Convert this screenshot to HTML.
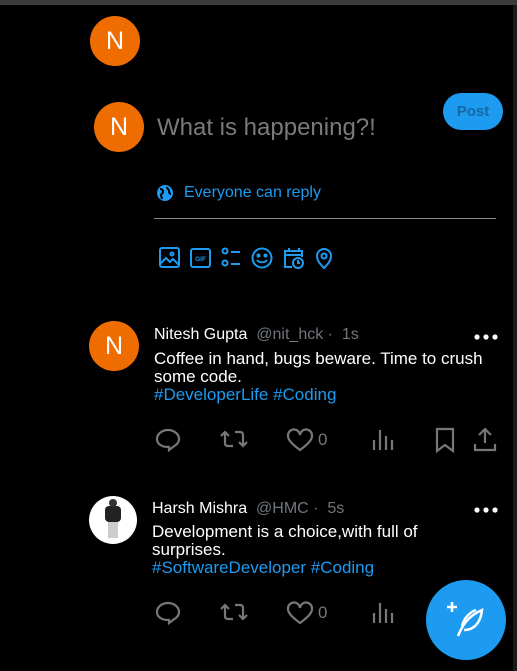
<!DOCTYPE html>
<html><head><style>
body{margin:0;width:517px;height:671px;background:#000;overflow:hidden;position:relative;font-family:"Liberation Sans",sans-serif;}
.a{position:absolute}
.av{position:absolute;border-radius:50%;background:#ef6c00;color:#fff;text-align:center;font-size:25px}
.t{position:absolute;white-space:nowrap}
.g{color:#71767b}
.b{color:#1d9bf0}
svg{position:absolute}
</style></head><body>
<div class="a" style="left:0;top:0;width:517px;height:5px;background:#3c3c3c"></div>
<div class="a" style="left:513px;top:5px;width:4px;height:666px;background:#1a1a1a"></div>
<div class="av" style="left:90px;top:16px;width:50px;height:50px;line-height:50px">N</div>
<div class="av" style="left:94px;top:102px;width:50px;height:50px;line-height:50px">N</div>
<div class="t" style="left:157px;top:114px;font-size:24px;color:#7a7a7a">What is happening?!</div>
<div class="a" style="left:443px;top:93px;width:60px;height:37px;border-radius:19px;background:#1d9bf0;color:#1769a6;font-weight:bold;font-size:15px;text-align:center;line-height:37px">Post</div>
<svg style="left:156px;top:184px" width="18" height="18" viewBox="0 0 18 18"><circle cx="9" cy="9" r="8" fill="#1d9bf0"/><path d="M4 5c2 0 3 1 3 3s-2 1-2 3l1 4M11 3c0 2 2 2 2 4s1 3 2 3" stroke="#000" stroke-width="2" fill="none"/></svg>
<div class="t b" style="left:184px;top:184px;font-size:16px">Everyone can reply</div>
<div class="a" style="left:154px;top:218px;width:342px;height:1px;background:#888"></div>
<svg style="left:158px;top:246px" width="180" height="24" viewBox="0 0 180 24" fill="none" stroke="#1d9bf0" stroke-width="2">
<rect x="2" y="2" width="19" height="19" rx="2"/><path d="M2 18l6-6 4 4 3-3 6 6"/><circle cx="14" cy="8" r="1.5"/>
<rect x="33" y="3" width="19" height="18" rx="2"/><text x="42.5" y="15" font-size="6.5" font-family="Liberation Sans" font-weight="bold" fill="#1d9bf0" stroke="none" text-anchor="middle">GIF</text>
<circle cx="67" cy="5" r="2.5"/><circle cx="67" cy="17" r="2.5"/><path d="M73 6h9M73 18h9"/>
<circle cx="104" cy="12" r="9.5"/><circle cx="100.5" cy="9.5" r="1" fill="#1d9bf0"/><circle cx="107.5" cy="9.5" r="1" fill="#1d9bf0"/><path d="M99 14c2 3 8 3 10 0"/>
<path d="M134 21h-7v-16h17v6M127 9h17M131 2v4M141 2v4"/><circle cx="140" cy="17" r="5"/><path d="M140 14v3h2"/>
<path d="M166 22c-5-5-7-8-7-12a7 7 0 0114 0c0 4-2 7-7 12z"/><circle cx="166" cy="10" r="2.5"/>
</svg>
<div class="av" style="left:89px;top:321px;width:50px;height:50px;line-height:50px">N</div>
<div class="t" style="left:154px;top:326px;font-size:16px;color:#fff">Nitesh Gupta <span class="g">&nbsp;@nit_hck · &nbsp;1s</span></div>
<svg style="left:474px;top:333px" width="24" height="8"><circle cx="3" cy="4" r="2.6" fill="#fff"/><circle cx="12" cy="4" r="2.6" fill="#fff"/><circle cx="21" cy="4" r="2.6" fill="#fff"/></svg>
<div class="t" style="left:154px;top:350px;font-size:17px;color:#fff;line-height:18px">Coffee in hand, bugs beware. Time to crush<br>some code.<br><span class="b">#DeveloperLife #Coding</span></div>
<div class="av" style="left:89px;top:496px;width:48px;height:48px;background:#fff;overflow:hidden"><div class="a" style="left:16px;top:10px;width:16px;height:16px;background:#222;border-radius:4px"></div><div class="a" style="left:20px;top:3px;width:8px;height:8px;background:#333;border-radius:50%"></div><div class="a" style="left:19px;top:26px;width:10px;height:16px;background:#ccc"></div></div>
<div class="t" style="left:152px;top:500px;font-size:16px;color:#fff">Harsh Mishra <span class="g">&nbsp;@HMC · &nbsp;5s</span></div>
<svg style="left:474px;top:506px" width="24" height="8"><circle cx="3" cy="4" r="2.6" fill="#fff"/><circle cx="12" cy="4" r="2.6" fill="#fff"/><circle cx="21" cy="4" r="2.6" fill="#fff"/></svg>
<div class="t" style="left:152px;top:523px;font-size:17px;color:#fff;line-height:18px">Development is a choice,with full of<br>surprises.<br><span class="b">#SoftwareDeveloper #Coding</span></div>

<svg style="left:155px;top:426px" width="350" height="28" viewBox="0 0 350 28" fill="none" stroke="#777" stroke-width="2.2">
<path d="M13 21c-6 0-11-3-11-8s5-9 11-9 11 4 11 9c0 4-3 6-6 8l-4 3v-3z"/>
<path d="M66 10l4-4 4 4M70 6v11c0 2 1 3 3 3h5M92 16l-4 4-4-4M88 20v-11c0-2-1-3-3-3h-5"/>
<path d="M145 24c-8-6-12-10-12-14a6 6 0 0112-1 6 6 0 0112 1c0 4-4 8-12 14z"/>
<path d="M225 4v20M231 10v14M237 14v10M219 14v10"/>
<path d="M282 3h16v22l-8-6-8 6z"/>
<path d="M330 17v-14M324 9l6-6 6 6M320 18v6h20v-6"/>
</svg>
<div class="t" style="left:318px;top:430px;font-size:17px;color:#777">0</div>
<svg style="left:155px;top:599px" width="240" height="28" viewBox="0 0 240 28" fill="none" stroke="#777" stroke-width="2.2">
<path d="M13 21c-6 0-11-3-11-8s5-9 11-9 11 4 11 9c0 4-3 6-6 8l-4 3v-3z"/>
<path d="M66 10l4-4 4 4M70 6v11c0 2 1 3 3 3h5M92 16l-4 4-4-4M88 20v-11c0-2-1-3-3-3h-5"/>
<path d="M145 24c-8-6-12-10-12-14a6 6 0 0112-1 6 6 0 0112 1c0 4-4 8-12 14z"/>
<path d="M225 4v20M231 10v14M237 14v10M219 14v10"/>
</svg>
<div class="t" style="left:318px;top:603px;font-size:17px;color:#777">0</div>
<div class="a" style="left:426px;top:580px;width:80px;height:80px;border-radius:50%;background:#1d9bf0"></div>
<svg style="left:444px;top:600px" width="44" height="40" viewBox="0 0 44 40" fill="none" stroke="#fff" stroke-width="2.5">
<path d="M8 2v10M3 7h10"/><path d="M14 36c4-10 10-20 24-26-1 10-6 20-18 20M18 26c2-8 8-14 14-16"/>
</svg>
</body></html>
